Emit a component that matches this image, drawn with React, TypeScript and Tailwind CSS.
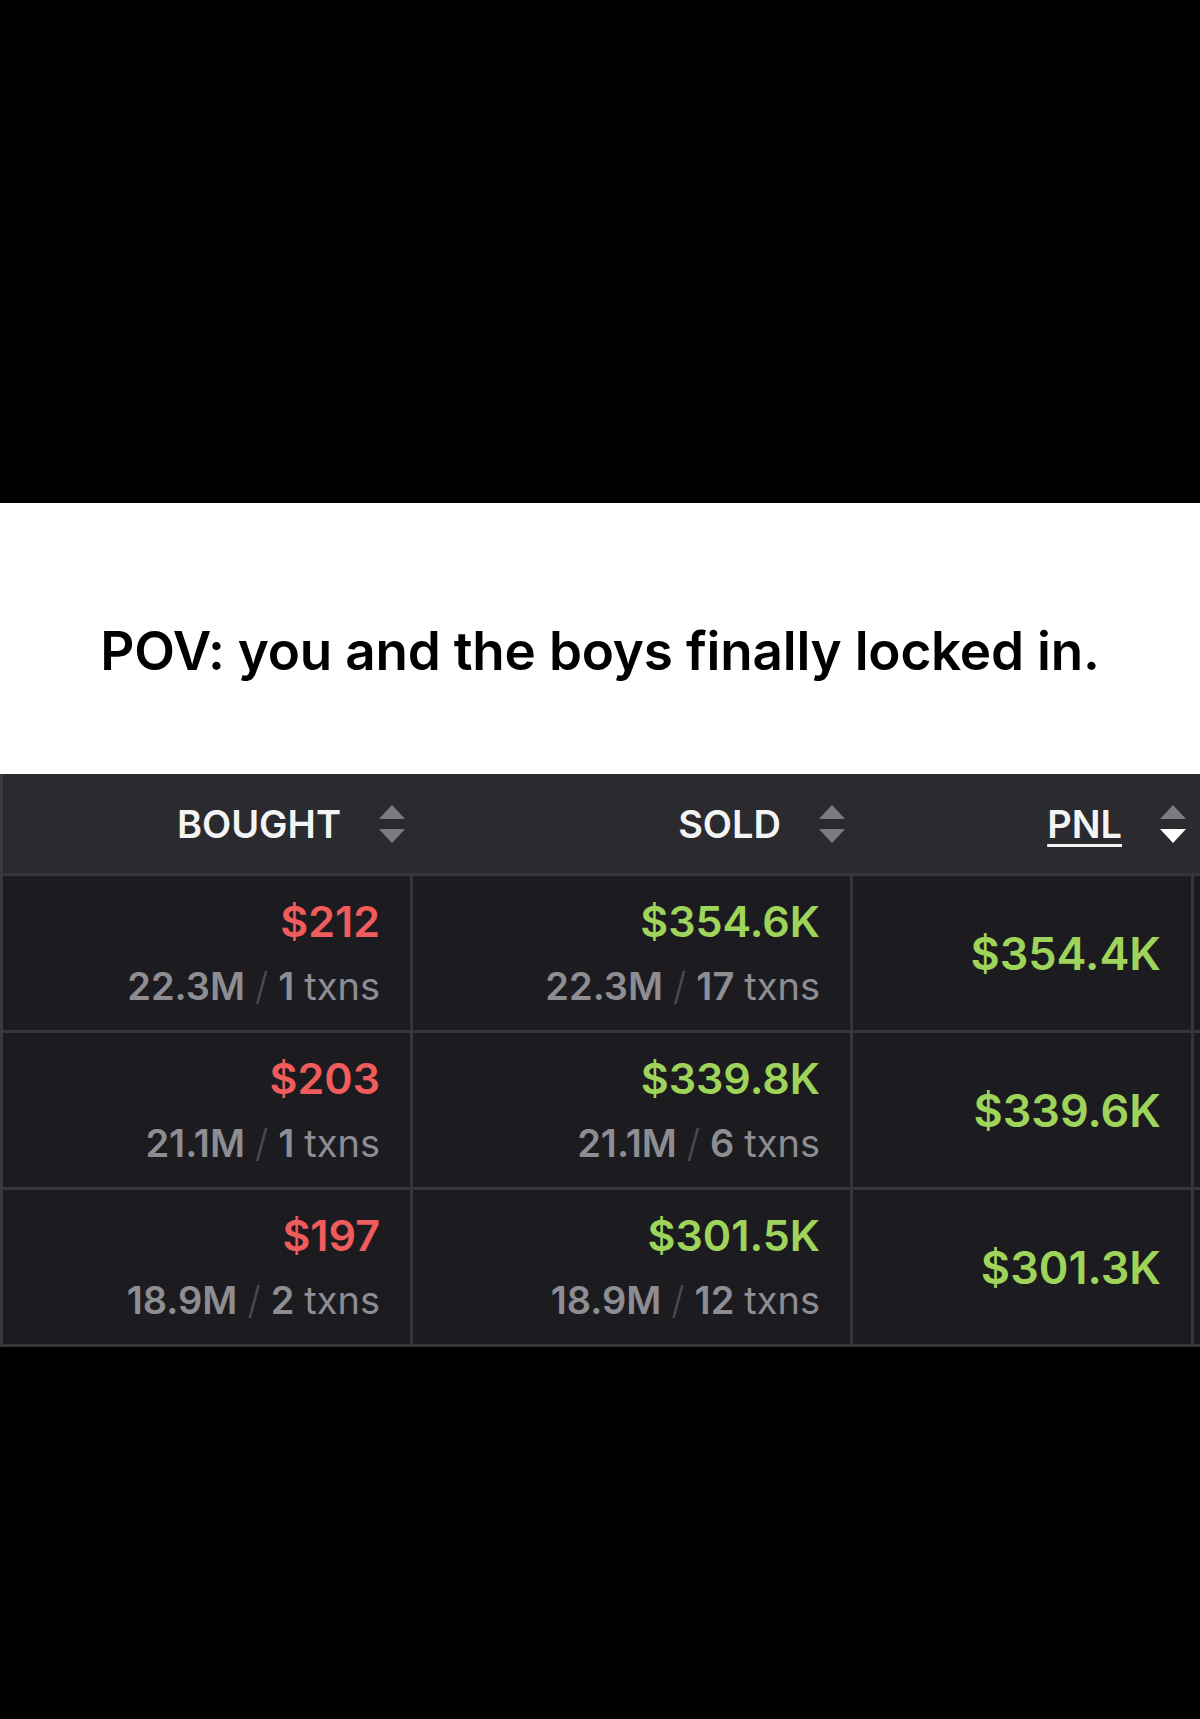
import React from 'react'

type Row = {
  bought: string
  boughtQty: string
  boughtTx: string
  sold: string
  soldQty: string
  soldTx: string
  pnl: string
}

const rows: Row[] = [
  { bought: '$212', boughtQty: '22.3M', boughtTx: '1', sold: '$354.6K', soldQty: '22.3M', soldTx: '17', pnl: '$354.4K' },
  { bought: '$203', boughtQty: '21.1M', boughtTx: '1', sold: '$339.8K', soldQty: '21.1M', soldTx: '6', pnl: '$339.6K' },
  { bought: '$197', boughtQty: '18.9M', boughtTx: '2', sold: '$301.5K', soldQty: '18.9M', soldTx: '12', pnl: '$301.3K' },
]

function SortIcon({ active }: { active?: boolean }) {
  return (
    <svg width="26" height="38" viewBox="0 0 26 38" className="shrink-0">
      <path d="M13 0 L26 14 L0 14 Z" fill="#7b7b80" />
      <path d="M0 24 L26 24 L13 38 Z" fill={active ? '#ffffff' : '#7b7b80'} />
    </svg>
  )
}

function HeaderCell({ label, active }: { label: string; active?: boolean }) {
  return (
    <div className="flex items-center justify-end gap-[38px] pr-[8px]">
      <span
        className={`text-[38px] leading-none font-semibold text-[#f4f4f5] ${
          active ? 'underline decoration-[3px] underline-offset-[6px]' : ''
        }`}
      >
        {label}
      </span>
      <SortIcon active={active} />
    </div>
  )
}

function Cell({ value, color, qty, tx }: { value: string; color: string; qty: string; tx: string }) {
  return (
    <div className="flex flex-col items-end justify-center pr-[30px] border-r-[3px] border-[#36363a]">
      <div className={`text-[43px] leading-[48px] font-semibold ${color}`}>{value}</div>
      <div className="mt-[17px] text-[38px] leading-[48px] text-[#8d8d92] flex items-baseline">
        <span className="font-semibold">{qty}</span>
        <span className="mx-[10px] font-light text-[#4b4b50]">/</span>
        <span className="font-semibold mr-[10px]">{tx}</span>
        <span className="font-normal">txns</span>
      </div>
    </div>
  )
}

export default function App() {
  return (
    <div className="w-[1200px] h-[1719px] bg-black flex flex-col" style={{ fontFamily: 'Inter, "Noto Sans", sans-serif' }}>
      <div className="h-[503px] bg-black" />
      <div className="h-[271px] bg-white flex items-center justify-center">
        <p className="text-[53px] font-semibold text-black tracking-[-0.2px] mt-[26px]">
          POV: you and the boys finally locked in.
        </p>
      </div>

      <div className="flex flex-col border-l-[3px] border-[#3a3a3e]">
        <div className="h-[102px] bg-[#2a2a2f] grid grid-cols-[410px_440px_341px_6px] border-b-[3px] border-[#36363a]">
          <HeaderCell label="BOUGHT" />
          <HeaderCell label="SOLD" />
          <HeaderCell label="PNL" active />
          <div />
        </div>
        {rows.map((r) => (
          <div
            key={r.pnl}
            className="h-[157px] bg-[#1c1c20] grid grid-cols-[410px_440px_341px_6px] border-b-[3px] border-[#36363a]"
          >
            <Cell value={r.bought} color="text-[#f05b5b]" qty={r.boughtQty} tx={r.boughtTx} />
            <Cell value={r.sold} color="text-[#9fd45a]" qty={r.soldQty} tx={r.soldTx} />
            <div className="flex items-center justify-end pr-[30px] border-r-[3px] border-[#36363a]">
              <span className="text-[45px] leading-none font-semibold text-[#9fd45a]">{r.pnl}</span>
            </div>
            <div className="bg-[#1a1a1d]" />
          </div>
        ))}
      </div>
      <div className="flex-1 bg-black" />
    </div>
  )
}
